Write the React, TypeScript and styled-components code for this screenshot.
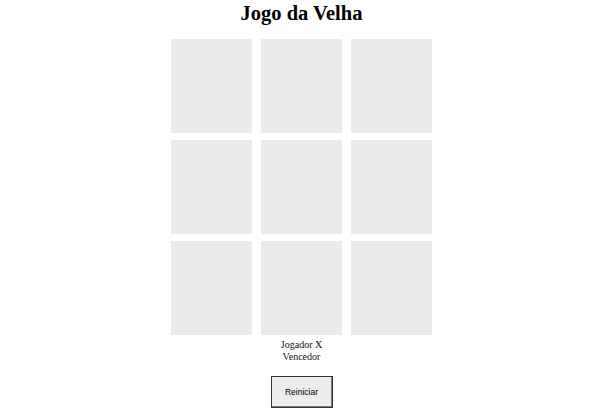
import React, { useState } from "react";
import styled, { createGlobalStyle } from "styled-components";

const GlobalStyle = createGlobalStyle`
  body {
    margin: 0;
    background: #ffffff;
    font-family: "Liberation Serif", "Times New Roman", serif;
  }
`;

const Page = styled.div`
  display: flex;
  flex-direction: column;
  align-items: center;
  padding-left: 3px;
`;

const Title = styled.h1`
  margin: 0;
  font-size: 20.5px;
  line-height: 26px;
  font-weight: bold;
  color: #000;
`;

const Board = styled.div`
  display: grid;
  grid-template-columns: repeat(3, 81px);
  grid-auto-rows: 94px;
  column-gap: 9px;
  row-gap: 7px;
  margin-top: 13px;
`;

const Cell = styled.button`
  border: none;
  padding: 0;
  background: #ecebec;
  font-family: "Liberation Serif", serif;
  font-size: 40px;
  cursor: pointer;
`;

const Status = styled.div`
  margin-top: 4px;
  font-size: 10px;
  line-height: 12px;
  text-align: center;
  color: #111;
`;

const ResetButton = styled.button`
  margin-top: 13px;
  width: 62px;
  height: 32px;
  padding: 0;
  background: #ececec;
  border: 1px solid #333;
  box-shadow: inset -1px -1px 0 #777;
  font-family: "Liberation Sans", Arial, sans-serif;
  font-size: 8.5px;
  color: #000;
`;

export default function App() {
  const [cells, setCells] = useState<string[]>(Array(9).fill(""));

  return (
    <Page>
      <GlobalStyle />
      <Title>Jogo da Velha</Title>
      <Board>
        {cells.map((value, i) => (
          <Cell
            key={i}
            onClick={() => {
              const next = [...cells];
              next[i] = "X";
              setCells(next);
            }}
          >
            {value}
          </Cell>
        ))}
      </Board>
      <Status>
        Jogador X
        <br />
        Vencedor
      </Status>
      <ResetButton onClick={() => setCells(Array(9).fill(""))}>Reiniciar</ResetButton>
    </Page>
  );
}
